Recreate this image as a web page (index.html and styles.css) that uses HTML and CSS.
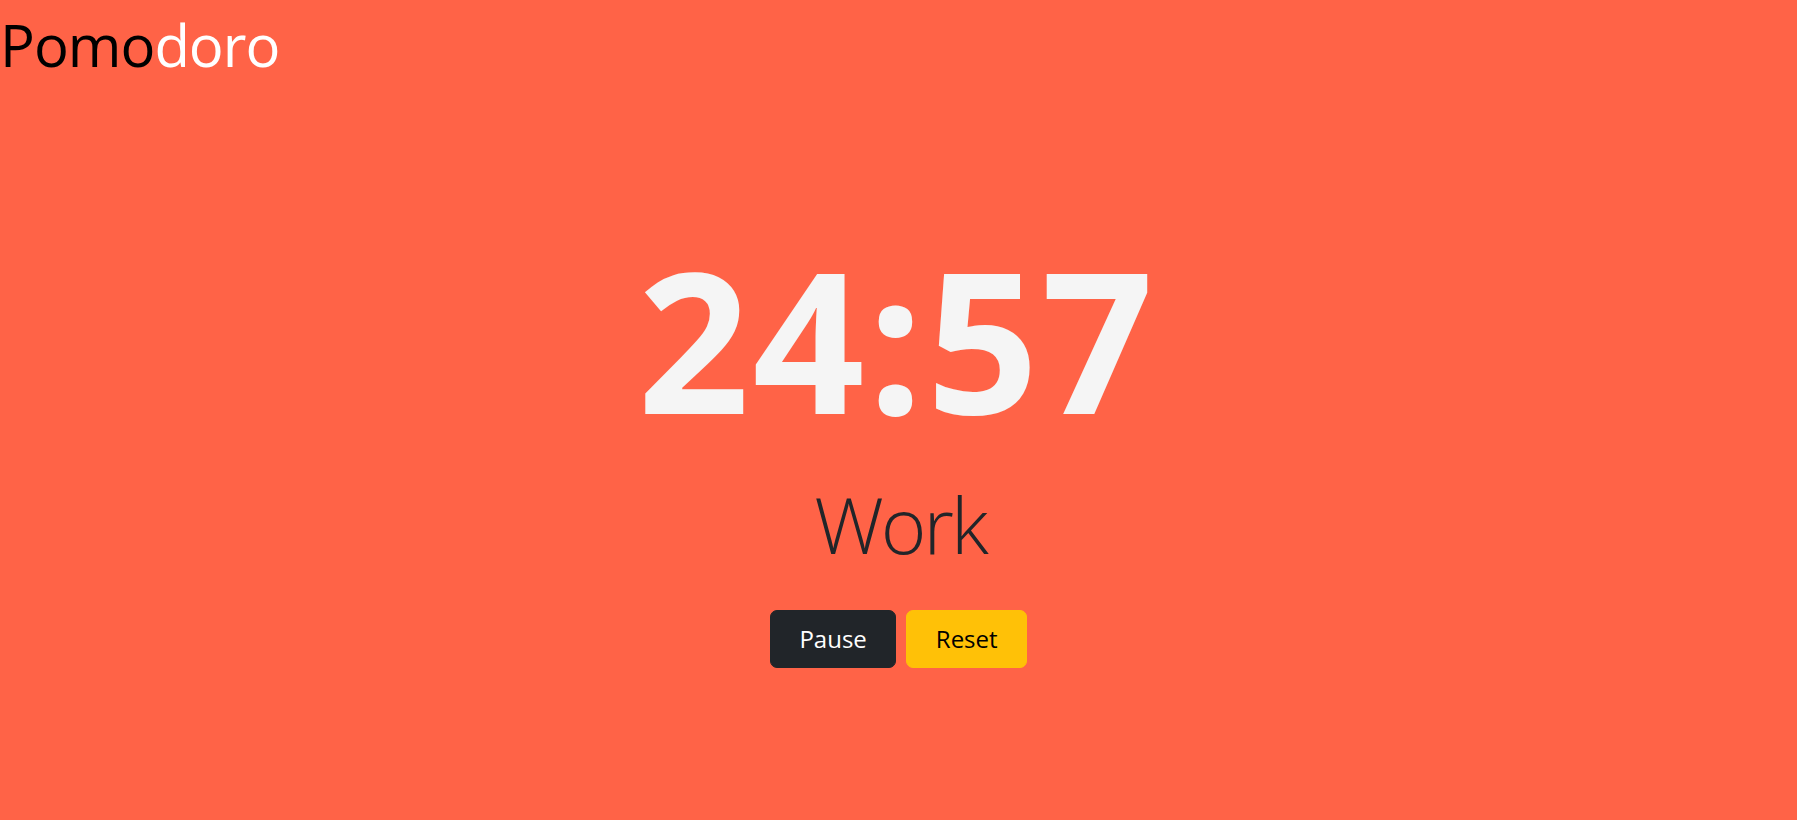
FILE: index.html
```html
<!DOCTYPE html>
<html lang="en">
<head>
<meta charset="utf-8">
<title>Pomodoro</title>
<link rel="stylesheet" href="styles.css">
</head>
<body>
<header class="header">
  <h1 class="brand"><span class="brand-dark">Pomo</span><span class="brand-light">doro</span></h1>
</header>
<main class="main">
  <div class="timer">24:57</div>
  <div class="mode">Work</div>
  <div class="controls">
    <button class="btn btn-dark">Pause</button>
    <button class="btn btn-warning">Reset</button>
  </div>
</main>
</body>
</html>
```
FILE: styles.css
```css
html, body {
  margin: 0;
  padding: 0;
}
body {
  background: #ff6347;
  font-family: "Open Sans", "Noto Sans", sans-serif;
  min-height: 100vh;
}
.header {
  padding: 0;
}
.brand {
  margin: 0;
  padding-top: 10px;
  font-size: 58px;
  font-weight: 400;
  line-height: 1.2;
  letter-spacing: -1px;
}
.brand-dark { color: #000; }
.brand-light { color: #fff; }
.main {
  display: flex;
  flex-direction: column;
  align-items: center;
  padding-top: 141px;
}
.timer {
  color: #f5f5f5;
  font-weight: 700;
  font-size: 196px;
  line-height: 1.2;
  letter-spacing: 3px;
  padding-right: 3px;
}
.mode {
  margin-top: 22px;
  color: #212529;
  font-weight: 300;
  font-size: 78px;
  line-height: 1.2;
  letter-spacing: -3px;
  padding-left: 3px;
}
.controls {
  display: flex;
  gap: 10px;
  margin-top: 39px;
}
.btn {
  font-family: inherit;
  font-size: 24px;
  line-height: 1.5;
  padding: 10px 28.5px;
  border: 1px solid transparent;
  border-radius: 7px;
  cursor: pointer;
}
.btn-dark {
  background: #212529;
  border-color: #212529;
  color: #fff;
}
.btn-warning {
  background: #ffc107;
  border-color: #ffc107;
  color: #000;
}
```
